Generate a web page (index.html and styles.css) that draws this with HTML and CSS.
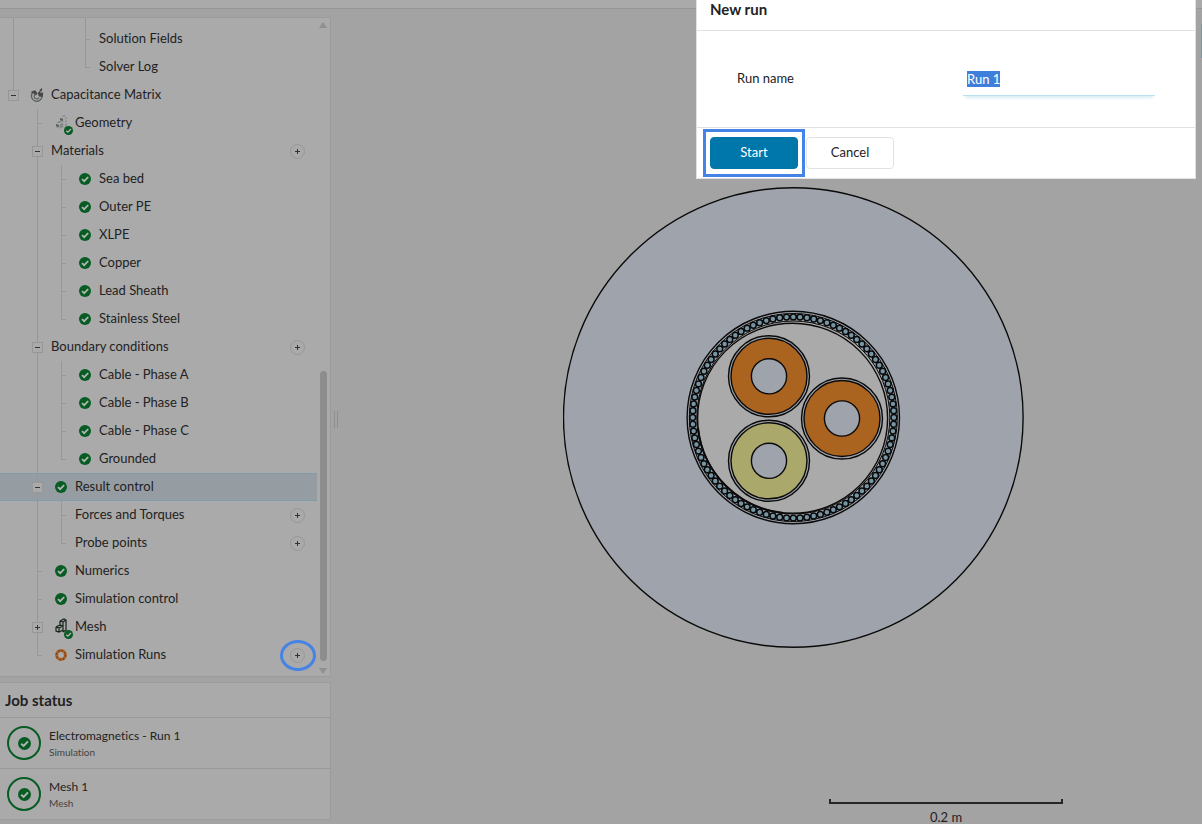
FILE: index.html
```html
<!DOCTYPE html>
<html lang="en">
<head>
<meta charset="utf-8">
<meta name="viewport" content="width=device-width, initial-scale=1">
<title>New run</title>
<link rel="stylesheet" href="styles.css">
</head>
<body>
<svg class="defs" aria-hidden="true">
  <symbol id="ok" viewBox="0 0 12 12"><circle cx="6" cy="6" r="6" fill="#075c23"/><path d="M3 6.2 5.2 8.2 9.2 4" fill="none" stroke="#b4b4b4" stroke-width="1.8"/></symbol>
  <symbol id="magnet" viewBox="0 0 14 14"><path d="M2 5.6A5.3 5.3 0 1 0 12 8.6" fill="none" stroke="#5c625e" stroke-width="1.3"/><path d="M5 6.4A2.6 2.6 0 1 0 9 9.6" fill="none" stroke="#59605b" stroke-width="1.2"/><path d="M1.4 3.4 5.4 2.2 7.4 5.6 6 7.4 3.4 5.2 1.6 6Z" fill="#454846"/><path d="M7.6 5.2 10 2.6 9.4 1.8 12.2 0 11.8 3.4 10.8 3 10 4.8 13.2 4.6 12.8 9 9 8.4Z" fill="#454846"/></symbol>
  <symbol id="solid" viewBox="0 0 18 18"><path d="M5 3 9 1 12 2 12 12 9 14 5 12Z" fill="#929292"/><path d="M5 3 9 4 12 2M9 4V14M9 7 12 5M9 10 12 8" fill="none" stroke="#b5b5b5"/><path d="M1 9 4 7 8 8 8 13 4 15 1 13Z" fill="#858985"/><path d="M1 9 4 10 8 8M4 10V15" fill="none" stroke="#b5b5b5"/><path d="M5 4 8 5V7L5 6ZM1 10 4 11V13L1 12Z" fill="#56645a"/></symbol>
  <symbol id="wire" viewBox="0 0 18 18"><path d="M5 3 9 1 11 2 11 12 8 14M5 3V8M5 3 8 4 11 2M8 4V14M1 9 5 7 8 8M1 9V13L4 14 8 12M1 9 4 10 8 8M4 10V14" fill="none" stroke="#17231a" stroke-width="1.2"/></symbol>
</svg>
<div class="app">
  <header class="topbar"></header>
  <div class="workspace">
    <aside class="sidebar">
      <section class="panel tree-panel">
        <ul class="tree">
          <li class="row lead"><i class="line"></i><i></i><i></i><i class="line"></i></li>
          <li class="row"><i class="line"></i><i></i><i></i><i class="tee"></i><a>Solution Fields</a></li>
          <li class="row"><i class="line"></i><i></i><i></i><i class="end"></i><a>Solver Log</a></li>
          <li class="row"><i class="up"><button class="toggle" aria-label="Collapse"></button></i><span class="icon"><svg width="14" height="14"><use href="#magnet"/></svg></span><a>Capacitance Matrix</a></li>
          <li class="row"><i></i><i class="tee"></i><span class="icon part"><svg width="18" height="18"><use href="#solid"/></svg><svg class="badge" width="9" height="9"><use href="#ok"/></svg></span><a>Geometry</a></li>
          <li class="row"><i></i><i class="line"><button class="toggle" aria-label="Collapse"></button></i><a>Materials</a><button class="add" aria-label="Add"></button></li>
          <li class="row"><i></i><i class="line"></i><i class="tee"></i><span class="icon"><svg width="12" height="12"><use href="#ok"/></svg></span><a>Sea bed</a></li>
          <li class="row"><i></i><i class="line"></i><i class="tee"></i><span class="icon"><svg width="12" height="12"><use href="#ok"/></svg></span><a>Outer PE</a></li>
          <li class="row"><i></i><i class="line"></i><i class="tee"></i><span class="icon"><svg width="12" height="12"><use href="#ok"/></svg></span><a>XLPE</a></li>
          <li class="row"><i></i><i class="line"></i><i class="tee"></i><span class="icon"><svg width="12" height="12"><use href="#ok"/></svg></span><a>Copper</a></li>
          <li class="row"><i></i><i class="line"></i><i class="tee"></i><span class="icon"><svg width="12" height="12"><use href="#ok"/></svg></span><a>Lead Sheath</a></li>
          <li class="row"><i></i><i class="line"></i><i class="end"></i><span class="icon"><svg width="12" height="12"><use href="#ok"/></svg></span><a>Stainless Steel</a></li>
          <li class="row"><i></i><i class="line"><button class="toggle" aria-label="Collapse"></button></i><a>Boundary conditions</a><button class="add" aria-label="Add"></button></li>
          <li class="row"><i></i><i class="line"></i><i class="tee"></i><span class="icon"><svg width="12" height="12"><use href="#ok"/></svg></span><a>Cable - Phase A</a></li>
          <li class="row"><i></i><i class="line"></i><i class="tee"></i><span class="icon"><svg width="12" height="12"><use href="#ok"/></svg></span><a>Cable - Phase B</a></li>
          <li class="row"><i></i><i class="line"></i><i class="tee"></i><span class="icon"><svg width="12" height="12"><use href="#ok"/></svg></span><a>Cable - Phase C</a></li>
          <li class="row"><i></i><i class="line"></i><i class="end"></i><span class="icon"><svg width="12" height="12"><use href="#ok"/></svg></span><a>Grounded</a></li>
          <li class="row selected"><i></i><i class="line"><button class="toggle" aria-label="Collapse"></button></i><span class="icon"><svg width="12" height="12"><use href="#ok"/></svg></span><a>Result control</a></li>
          <li class="row"><i></i><i class="line"></i><i class="tee"></i><a>Forces and Torques</a><button class="add" aria-label="Add"></button></li>
          <li class="row"><i></i><i class="line"></i><i class="end"></i><a>Probe points</a><button class="add" aria-label="Add"></button></li>
          <li class="row"><i></i><i class="tee"></i><span class="icon"><svg width="12" height="12"><use href="#ok"/></svg></span><a>Numerics</a></li>
          <li class="row"><i></i><i class="tee"></i><span class="icon"><svg width="12" height="12"><use href="#ok"/></svg></span><a>Simulation control</a></li>
          <li class="row"><i></i><i class="line"><button class="toggle plus" aria-label="Expand"></button></i><span class="icon part"><svg width="18" height="18"><use href="#wire"/></svg><svg class="badge" width="9" height="9"><use href="#ok"/></svg></span><a>Mesh</a></li>
          <li class="row"><i></i><i class="end"></i><span class="icon"><svg width="12" height="12" viewBox="0 0 12 12"><circle cx="6" cy="6" r="4.4" fill="none" stroke="#a8642c" stroke-width="3"/><circle cx="6" cy="6" r="4.4" fill="none" stroke="#8a4510" stroke-width="2" stroke-dasharray="1.6 1.85"/></svg></span><a>Simulation Runs</a><button class="add marked" aria-label="Add"></button></li>
        </ul>
        <div class="scroll"><b class="arrow-up"></b><b class="thumb"></b><b class="arrow-down"></b></div>
      </section>
      <section class="panel jobs">
        <h2>Job status</h2>
        <div class="job"><svg width="34" height="34" viewBox="0 0 34 34"><circle cx="17" cy="17" r="16" fill="none" stroke="#075c23" stroke-width="2"/><use href="#ok" x="11" y="11" width="13" height="13"/></svg><div><p>Electromagnetics - Run 1</p><small>Simulation</small></div></div>
        <div class="job"><svg width="34" height="34" viewBox="0 0 34 34"><circle cx="17" cy="17" r="16" fill="none" stroke="#075c23" stroke-width="2"/><use href="#ok" x="11" y="11" width="13" height="13"/></svg><div><p>Mesh 1</p><small>Mesh</small></div></div>
      </section>
    </aside>
    <div class="splitter"><b></b></div>
    <main class="viewport">
      <svg class="cable" viewBox="563 187 461 461" fill="none" stroke="#0a0a0a" stroke-width="1.4">
        <circle cx="793.3" cy="417.5" r="229.8" fill="#9fa4ac"/>
        <circle cx="793.3" cy="417.5" r="106.2"/>
        <circle cx="793.3" cy="417.5" r="104" stroke-width="1"/>
        <circle cx="793.3" cy="417.5" r="96.5" fill="#aaa" stroke-width="1"/>
        <circle cx="793.3" cy="417.5" r="100.6" pathLength="92" stroke-width="7.4" stroke-linecap="round" stroke-dasharray="0 1"/>
        <circle cx="793.3" cy="417.5" r="100.6" pathLength="92" stroke="#7796a5" stroke-width="4.4" stroke-linecap="round" stroke-dasharray="0 1"/>
        <circle cx="792.6" cy="418.3" r="95"/>
        <path d="M698 428A96 96 0 0 0 783 513" stroke-width="2"/>
        <g>
          <circle cx="769" cy="376.3" r="40.5" fill="#9fa4ac"/><circle cx="769" cy="376.3" r="38" fill="#ab6320"/><circle cx="769" cy="376.3" r="17.6" fill="#9fa4ac"/>
          <circle cx="842" cy="418.5" r="40.5" fill="#9fa4ac"/><circle cx="842" cy="418.5" r="38" fill="#ab6320"/><circle cx="842" cy="418.5" r="17.6" fill="#9fa4ac"/>
          <circle cx="769" cy="460.8" r="40.5" fill="#9fa4ac"/><circle cx="769" cy="460.8" r="38" fill="#aba86c"/><circle cx="769" cy="460.8" r="17.6" fill="#9fa4ac"/>
        </g>
      </svg>
      <div class="drawer-edge"></div>
      <div class="scale"><b></b><span>0.2 m</span></div>
    </main>
  </div>
</div>
<form class="dialog" role="dialog" aria-labelledby="dialog-title">
  <h1 id="dialog-title">New run</h1>
  <div class="field"><label for="run-name">Run name</label><input id="run-name" type="text" value="Run 1" autofocus></div>
  <footer><span class="highlight"><button type="button" class="primary">Start</button></span><button type="button" class="cancel">Cancel</button></footer>
</form>
<script src="main.js"></script>
</body>
</html>
```
FILE: styles.css
```css
* { box-sizing: border-box; }
body { margin: 0; font: 13px/20px Lato, "Open Sans", sans-serif; font-variant-ligatures: none; color: #222; background: #a3a3a3; overflow: hidden; }
h1, h2, p, ul { margin: 0; padding: 0; }
button, input { font: inherit; color: inherit; }
.defs { display: none; }
.app { display: flex; flex-direction: column; height: 100vh; }
.topbar { flex: none; height: 9px; background: #aaa; border-bottom: 1px solid #979797; }
.workspace { flex: 1; display: flex; min-height: 0; }
.sidebar { flex: none; width: 331px; padding: 8px 0 4px; display: flex; flex-direction: column; gap: 5px; }
.panel { background: #aaa; border: 1px solid #9b9b9b; border-left: 0; }
.tree-panel { flex: 1; min-height: 0; display: flex; overflow: hidden; }
.tree { flex: 1; list-style: none; }
.row { --guide: #979797; display: flex; height: 28px; padding-left: 1px; }
.row.lead { height: 7px; }
.row i { flex: none; width: 24px; padding: 9px 0 0 7px; background-repeat: no-repeat; }
.line, .tee { background-image: linear-gradient(var(--guide), var(--guide)); background-position: 12px 0; background-size: 1px 100%; }
.row .tee { background-image: linear-gradient(var(--guide), var(--guide)), linear-gradient(var(--guide), var(--guide)); background-position: 12px 0, 12px 14px; background-size: 1px 100%, 5px 1px; }
.row .end { background-image: linear-gradient(var(--guide), var(--guide)), linear-gradient(var(--guide), var(--guide)); background-position: 12px 0, 12px 14px; background-size: 1px 14px, 5px 1px; }
.up { background-image: linear-gradient(var(--guide), var(--guide)); background-position: 12px 0; background-size: 1px 10px; }
.toggle { display: block; width: 11px; height: 11px; padding: 0; border: 1px solid #979797; background: linear-gradient(#333, #333) center / 5px 1px no-repeat #aaa; }
.toggle.plus { background: linear-gradient(#333, #333) center / 5px 1px no-repeat, linear-gradient(#333, #333) center / 1px 5px no-repeat #aaa; }
.row a { padding-left: 2px; line-height: 26px; white-space: nowrap; }
.icon { flex: none; width: 24px; display: flex; align-items: center; justify-content: center; }
.part { position: relative; justify-content: flex-end; }
.badge { position: absolute; right: 0; bottom: 2px; }
.add { width: 15px; height: 15px; margin: 7px 12px 0 auto; padding: 0; border: 1px solid #979797; border-radius: 50%; background: linear-gradient(#333, #333) center / 5px 1px no-repeat, linear-gradient(#333, #333) center / 1px 5px no-repeat; }
.marked { position: relative; }
.marked::after { content: ""; position: absolute; inset: -9px -12px -9px -11px; border: 3px solid #4583e6; border-radius: 50%; }
.selected { background: #959da2; border: solid #7f9dab; border-width: 1px 0; }
.selected i { padding-top: 8px; }
.selected a { line-height: 24px; }
.scroll { flex: none; width: 13px; display: flex; flex-direction: column; align-items: flex-start; padding: 4px 0 2px 2px; }
.arrow-up, .arrow-down { border: solid transparent; border-width: 0 4px; }
.arrow-up { border-bottom: 6px solid #8f8f8f; }
.arrow-down { border-top: 6px solid #8f8f8f; margin-top: 7px; }
.thumb { width: 7px; height: 290px; margin: auto 0 0 1px; border-radius: 4px; background: #8d8d8d; }
.jobs { flex: none; }
.jobs h2 { padding: 7px 5px 6px; font-size: 15px; line-height: 21px; }
.job { display: flex; align-items: center; gap: 8px; height: 51px; padding-left: 7px; border-top: 1px solid #999; }
.job p { font-size: 12px; line-height: 18px; }
.job small { display: block; font-size: 10px; line-height: 15px; color: #444; }
.splitter { flex: none; width: 9px; padding-top: 5px; display: flex; align-items: center; justify-content: center; }
.splitter b { width: 4px; height: 17px; border: solid #8f8f8f; border-width: 0 1px; }
.viewport { flex: 1; position: relative; }
.cable { position: absolute; left: 223px; top: 178px; width: 461px; height: 461px; }
.drawer-edge { position: absolute; right: 0; top: 15px; width: 1px; height: 34px; background: #7796a5; }
.scale { position: absolute; left: 489px; bottom: 0; width: 234px; text-align: center; }
.scale b { display: block; height: 5px; border: 2px solid #262626; border-top: 0; margin-bottom: 3px; }
.scale span { display: block; line-height: 20px; height: 17px; }
.dialog { position: absolute; top: 0; right: 6px; width: 500px; background: #fff; border: 1px solid #e1e3e3; border-top: 0; }
.dialog h1 { height: 31px; padding: 0 13px; font-size: 15px; line-height: 18px; border-bottom: 1px solid #e1e3e3; }
.field { display: flex; justify-content: space-between; align-items: center; height: 96px; padding: 0 40px; }
.field label { padding-bottom: 2px; }
.field input { width: 192px; height: 34px; padding: 0 4px; border: 0; border-bottom: 1px solid #b9e2ee; outline: 0; box-shadow: 0 4px 3px -2px #d9edf4; }
.field input::selection { background: #3f7fdc; color: #fff; }
.dialog footer { display: flex; align-items: center; height: 51px; padding-left: 6px; border-top: 1px solid #e1e3e3; }
.highlight { padding: 5px 4px; border: 3px solid #4583e6; }
.dialog footer button { display: block; width: 88px; height: 32px; padding: 0 0 2px; border: 1px solid #e1e3e3; border-radius: 4px; background: #fff; }
.dialog footer .primary { background: #0077ab; border-color: #0077ab; color: #fff; }
.dialog footer .cancel { margin-left: 1px; }
```
FILE: main.js
```js
document.getElementById("run-name").select();
```
